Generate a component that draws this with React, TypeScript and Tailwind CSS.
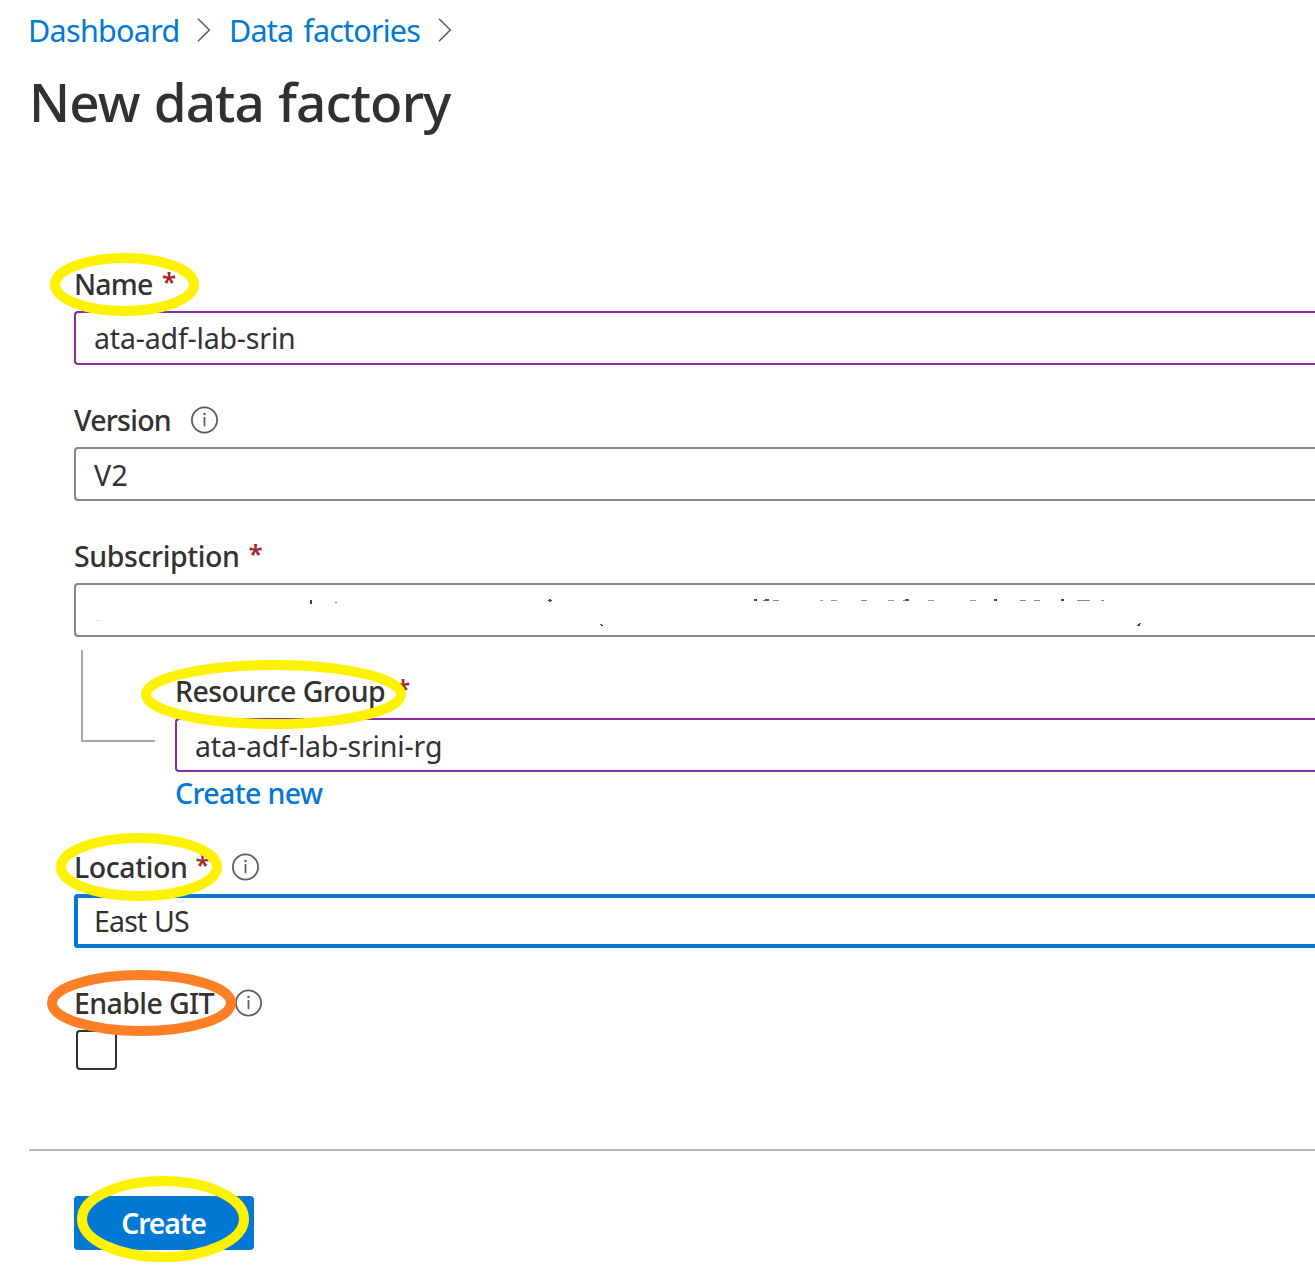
import type { ReactNode } from 'react';

function Chevron() {
  return (
    <svg width="14" height="24" viewBox="0 0 14 24" fill="none" className="shrink-0">
      <path d="M1 0.8 L12.3 12 L1 23.2" stroke="#605e5c" strokeWidth="1.6" />
    </svg>
  );
}

function InfoIcon() {
  return (
    <svg width="28" height="28" viewBox="0 0 28 28" fill="none" className="shrink-0">
      <circle cx="13.5" cy="14" r="12.6" stroke="#605e5c" strokeWidth="1.8" />
      <rect x="12.6" y="11" width="1.8" height="9.3" fill="#605e5c" />
      <circle cx="13.5" cy="8" r="1.25" fill="#605e5c" />
    </svg>
  );
}

/* Hand-drawn style marker ring laid over a control */
function Ring({ w, h, className, color = '#fff200' }: { w: number; h: number; className: string; color?: string }) {
  return (
    <svg width={w} height={h} viewBox={`0 0 ${w} ${h}`} fill="none" className={`pointer-events-none absolute z-10 max-w-none ${className}`}>
      <ellipse cx={w / 2} cy={h / 2} rx={w / 2 - 5} ry={h / 2 - 5} stroke={color} strokeWidth="10" />
    </svg>
  );
}

function Label({ children, tracking }: { children: ReactNode; tracking: string }) {
  return <span className={`pt-px text-[28.5px] leading-10 font-medium whitespace-nowrap ${tracking}`}>{children}</span>;
}

function Star({ className }: { className: string }) {
  return <span className={`w-[15px] text-[26px] leading-9 font-semibold text-[#a4262c] ${className}`}>*</span>;
}

function Box({ children, className }: { children?: ReactNode; className: string }) {
  return (
    <div className={`h-[54px] rounded-l-[4px] border-2 border-r-0 pl-[18px] text-[28.5px] whitespace-nowrap ${className}`}>
      {children}
    </div>
  );
}

/* Faint remnants of the masked subscription id */
const specks: [number, number, number, number, string][] = [
  [310, 600, 2, 4, '#444'], [335, 602, 2, 1, '#777'], [97, 620, 2, 1, '#ccc'],
  [548, 600, 4, 1, '#333'], [549, 599, 2, 3, '#555'], [600, 624, 2, 1, '#666'], [601, 625, 2, 1, '#444'],
  [754, 599, 3, 2, '#444'], [763, 600, 5, 1, '#777'], [765, 599, 4, 2, '#555'], [773, 600, 6, 1, '#888'],
  [820, 600, 3, 1, '#999'], [831, 600, 6, 1, '#999'], [861, 600, 6, 1, '#888'],
  [888, 600, 6, 1, '#999'], [903, 600, 6, 1, '#888'], [905, 599, 4, 2, '#555'],
  [928, 600, 6, 1, '#999'], [970, 600, 6, 1, '#999'], [994, 599, 3, 2, '#444'],
  [1020, 600, 6, 1, '#888'], [1034, 600, 6, 1, '#888'], [1061, 599, 3, 2, '#444'],
  [1077, 600, 13, 1, '#888'], [1101, 600, 3, 1, '#888'],
  [1137, 625, 3, 1, '#555'], [1138, 624, 2, 1, '#333'], [1139, 623, 2, 1, '#666'],
];

export default function App() {
  return (
    <div className="h-[1287px] w-full overflow-hidden bg-white font-['Noto_Sans',sans-serif] text-[#323130]">
      <nav className="flex h-[50px] items-start pt-[10px] pl-7 text-[30.5px] leading-10 text-[#0078d4]">
        <a className="w-[169px] tracking-[-0.7px] whitespace-nowrap">Dashboard</a>
        <span className="mt-2 w-8"><Chevron /></span>
        <a className="w-[209px] tracking-[-0.82px] whitespace-nowrap [word-spacing:3px]">Data factories</a>
        <span className="mt-2"><Chevron /></span>
      </nav>
      <h1 className="mt-[15px] ml-[29px] h-[198px] pt-px text-[53px] leading-[72px] font-medium tracking-[-0.85px] whitespace-nowrap [word-spacing:1px]">
        New data factory
      </h1>

      <main className="pl-[74px]">
        <section className="relative h-[136px]">
          <div className="flex h-12 items-start">
            <Label tracking="tracking-[-0.8px]">Name</Label>
            <Star className="ml-[9.5px]" />
          </div>
          <Box className="border-[#8a2ba5] leading-[50px] tracking-[-0.18px]">ata-adf-lab-srin</Box>
          <Ring w={149} h={63} className="top-[-10px] left-[-24px]" />
        </section>

        <section className="h-[136px]">
          <div className="flex h-12 items-start">
            <Label tracking="tracking-[-0.75px]">Version</Label>
            <span className="mt-[7px] ml-[20.5px]"><InfoIcon /></span>
          </div>
          <Box className="border-[#8a8886] leading-[52px] tracking-[0.4px]">V2</Box>
        </section>

        <section className="relative h-[136px]">
          <div className="flex h-12 items-start">
            <Label tracking="tracking-[-0.41px]">Subscription</Label>
            <Star className="ml-[9px]" />
          </div>
          <Box className="border-[#8a8886]" />
          <svg width="1241" height="50" viewBox="74 585 1241 50" className="absolute top-[50px] left-0" shapeRendering="crispEdges">
            {specks.map(([x, y, w, h, c], i) => <rect key={i} x={x} y={y} width={w} height={h} fill={c} />)}
          </svg>
        </section>

        <section className="flex h-[175px]">
          <div className="mt-[-21px] ml-[7px] h-[92px] w-[74px] shrink-0 border-b-2 border-l-2 border-[#a6a6a6]" />
          <div className="relative ml-5 grow">
            <div className="-mt-px flex h-12 items-start">
              <Label tracking="tracking-[-0.56px]">Resource Group</Label>
              <Star className="ml-[11px]" />
            </div>
            <Box className="border-[#8a2ba5] leading-[52px] tracking-[-0.13px]">ata-adf-lab-srini-rg</Box>
            <a className="block pt-px text-[28.5px] leading-10 font-medium tracking-[-0.62px] text-[#0078d4]">Create new</a>
            <Ring w={265} h={69} className="top-[-11px] left-[-34px]" />
          </div>
        </section>

        <section className="relative h-[136px]">
          <div className="flex h-12 items-start">
            <Label tracking="tracking-[-0.42px]">Location</Label>
            <Star className="ml-[8px]" />
            <span className="mt-[7px] ml-[22px]"><InfoIcon /></span>
          </div>
          <div className="h-[54px] rounded-l-[4px] border-4 border-r-0 border-[#0078d4] pl-4 text-[28.5px] leading-[47px] tracking-[-0.84px] [word-spacing:1px]">East US</div>
          <Ring w={166} h={68} className="top-[-13px] left-[-18px]" />
        </section>

        <section className="relative h-[167px]">
          <div className="flex h-12 items-start">
            <Label tracking="tracking-[-0.6px]">Enable GIT</Label>
            <span className="mt-[7px] ml-[21px]"><InfoIcon /></span>
          </div>
          <div className="ml-[2px] h-10 w-[41px] rounded-[4px] border-2 border-[#323130]" />
          <Ring w={189} h={66} color="#ff7f27" className="top-[-12px] left-[-27px]" />
        </section>
      </main>

      <footer className="ml-[29px] border-t-2 border-[#bababa] pt-[45px] pl-[45px]">
        <div className="relative w-[180px]">
          <button className="block h-[54px] w-full rounded-[4px] bg-[#0078d4] pr-px text-[28.5px] leading-[54px] font-semibold tracking-[-1.15px] text-white">Create</button>
          <Ring w={172} h={86} className="top-[-20px] left-[3px]" />
        </div>
      </footer>
    </div>
  );
}
